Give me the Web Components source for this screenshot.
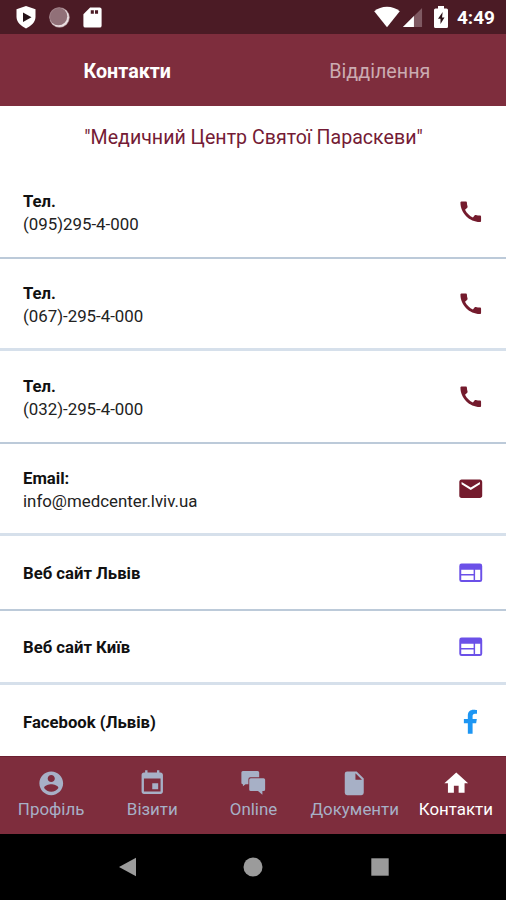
<!DOCTYPE html>
<html lang="uk">
<head>
<meta charset="utf-8">
<title>Контакти</title>
<style>
html,body{margin:0;height:100%;background:#fff}
body{font-family:Roboto,"Noto Sans",sans-serif;overflow:hidden}
</style>
</head>
<body>
<contacts-app></contacts-app>
<script>
const ICONS = {
  phone: '<path d="M20.01 15.38c-1.23 0-2.42-.2-3.53-.56-.35-.12-.74-.03-1.01.24l-1.57 1.97c-2.83-1.35-5.48-3.9-6.89-6.83l1.95-1.66c.27-.28.35-.67.24-1.02-.37-1.11-.56-2.3-.56-3.53 0-.54-.45-.99-.99-.99H4.19C3.65 3 3 3.24 3 3.99 3 13.28 10.73 21 20.01 21c.71 0 .99-.63.99-1.18v-3.45c0-.54-.45-.99-.99-.99z"/>',
  mail: '<path d="M20 4H4c-1.1 0-1.99.9-1.99 2L2 18c0 1.1.9 2 2 2h16c1.1 0 2-.9 2-2V6c0-1.1-.9-2-2-2zm0 4l-8 5-8-5V6l8 5 8-5v2z"/>',
  web: '<path fill-rule="evenodd" d="M4 4h16a2 2 0 0 1 2 2v12a2 2 0 0 1-2 2H4a2 2 0 0 1-2-2V6a2 2 0 0 1 2-2zM3.700 9.300v3.800h10.800V9.300zM3.700 14.400v3.900h10.800v-3.900zM15.800 9.300v9h4.500v-9z"/>',
  facebook: '<path d="M16.700 13.300l.6-3.800h-3.700V7c0-1.050.5-2.050 2.150-2.050h1.700V1.800S15.900 1.500 14.450 1.500c-3.050 0-5 1.800-5 5.150v2.850H6v3.800h3.450v9.200h4.150v-9.200z"/>',
  profile: '<path d="M12 2C6.480 2 2 6.480 2 12s4.480 10 10 10 10-4.480 10-10S17.520 2 12 2zm0 3c1.660 0 3 1.340 3 3s-1.340 3-3 3-3-1.340-3-3 1.340-3 3-3zm0 14.200c-2.500 0-4.710-1.280-6-3.220.03-1.990 4-3.080 6-3.080 1.990 0 5.970 1.090 6 3.080-1.290 1.940-3.500 3.220-6 3.220z"/>',
  event: '<path d="M17 12h-5v5h5v-5zM16 1v2H8V1H6v2H5c-1.110 0-1.990.9-1.990 2L3 19c0 1.100.89 2 2 2h14c1.100 0 2-.9 2-2V5c0-1.100-.9-2-2-2h-1V1h-2zm3 18H5V8h14v11z"/>',
  chat: '<path d="M3.300 1.700h12.400A1.300 1.300 0 0 1 17 3v4H9.500A1.600 1.600 0 0 0 7.900 8.600V12.800H5.500L3.300 14.500v-1.700A1.300 1.300 0 0 1 2 11.500V3a1.300 1.300 0 0 1 1.300-1.300z"/><path d="M9.900 7.700h10.800A1.300 1.300 0 0 1 22 9v8.200a1.300 1.300 0 0 1-1.300 1.300h-1v3.200L16 18.500H9.900a1.300 1.300 0 0 1-1.300-1.300V9a1.300 1.300 0 0 1 1.300-1.300z"/>',
  file: '<path fill-rule="evenodd" d="M6 2h8l6 6v12a2 2 0 0 1-2 2H6a2 2 0 0 1-2-2V4a2 2 0 0 1 2-2zM13 3.500V9h5.500z"/>',
  home: '<path d="M10 20v-6h4v6h5v-8h3L12 3 2 12h3v8z"/>',
  shield: '<path fill="#fff" d="M12 1l9.500 3.300V12c0 5.500-5 9-9.500 11.500C7.500 21 2.500 17.500 2.500 12V4.300z"/><path fill="#251318" d="M9 7.500v9.500l8.500-4.700z"/>',
  ring: '<circle cx="12" cy="12" r="10.300" fill="#eadfe1"/><circle cx="10.800" cy="10.800" r="9.300" fill="#917078"/><circle cx="12" cy="12" r="10.300" fill="none" stroke="#a98c93" stroke-width=".6"/>',
  sd: '<path fill="#fff" fill-rule="evenodd" d="M9.500 1.500h10a2 2 0 0 1 2 2v17a2 2 0 0 1-2 2h-15a2 2 0 0 1-2-2V8.500zM10.200 4.500V8h3.200V4.500zM14.600 4.500V8h3.200V4.500z"/>',
  wifi: '<path fill="#fff" d="M12 21.500L.2 6.600C3.500 4 7.500 2.500 12 2.500S20.500 4 23.800 6.600z"/>',
  signal: '<path fill="#7f5962" d="M2 22L22 2v20z"/><path fill="#fff" d="M2 22L13.500 10.500V22z"/>',
  battery: '<path fill="#fff" d="M9 1h6v2.500h2.500a1.500 1.500 0 0 1 1.500 1.500v16.500a1.500 1.500 0 0 1-1.500 1.500h-11A1.500 1.500 0 0 1 5 21.500V5a1.500 1.500 0 0 1 1.500-1.500H9z"/><path fill="#2c1218" d="M13.700 7L9 13.800h2.500V19l4-6.500H13z"/>',
  back: '<path d="M21 2.800v18.400L4 12z"/>',
  circle: '<circle cx="12" cy="12" r="9.500"/>',
  square: '<path d="M3.300 3.300h17.400v17.400H3.300z"/>'
};
const define = (tag, render) => customElements.define(tag, class extends HTMLElement {
  connectedCallback() {
    if (this.shadowRoot) return;
    this.attachShadow({mode: 'open'}).innerHTML = render(this);
  }
});

define('ui-icon', el => `<style>
:host{display:block;flex:none;width:var(--size,28px);height:var(--size,28px)}
svg{display:block;width:100%;height:100%;fill:currentColor}
</style><svg viewBox="0 0 24 24" aria-hidden="true">${ICONS[el.getAttribute('name')]}</svg>`);

define('status-bar', () => `<style>
:host{display:flex;align-items:center;justify-content:space-between;box-sizing:border-box;height:34px;padding:0 11px 0 14px;background:#4b1b25;color:#fff}
div{display:flex;align-items:center}
.left{gap:10px;--size:24px}
.ring{--size:23px}
.sd{--size:23px}
.right{--size:26px}
.signal{--size:23px;margin-left:1px}
.battery{--size:24px;margin-left:5px}
time{font:700 19px/24px Roboto,sans-serif;margin:2px 0 0 4px}
</style>
<div class="left"><ui-icon name="shield"></ui-icon><ui-icon class="ring" name="ring"></ui-icon><ui-icon class="sd" name="sd"></ui-icon></div>
<div class="right"><ui-icon name="wifi"></ui-icon><ui-icon class="signal" name="signal"></ui-icon><ui-icon class="battery" name="battery"></ui-icon><time>4:49</time></div>`);

define('top-tabs', () => `<style>
:host{display:grid;grid-template-columns:1fr 1fr;box-sizing:border-box;height:72px;padding:2px 0 0 1px;background:#7e2d3d}
::slotted(*){display:grid;place-items:center;font-size:19.700px;color:#cbabb1}
::slotted([selected]){font-weight:700;color:#fff}
</style><slot></slot>`);

define('contact-row', el => `<style>
:host{display:flex;align-items:center;justify-content:space-between;box-sizing:border-box;height:var(--h,92px);padding:2.500px 22px 0 23px;border-bottom:var(--line,2px solid #bccad9);color:#222;font-size:16.850px;line-height:23px}
:host([tall]){--h:92.330px}
:host(:not([tall])){--h:74.600px}
:host([soft]){--line:3px solid #d6e0eb}
:host([last]){--line:0;padding-top:0}
strong{display:block;font-weight:700;font-size:16.700px;color:#111}
ui-icon{--size:27.500px;color:var(--icon,#741b2d);margin-bottom:1.500px}
</style><div><strong>${el.getAttribute('label')}</strong><slot></slot></div><ui-icon name="${el.getAttribute('icon')}"></ui-icon>`);

define('nav-item', el => `<style>
:host{display:flex;flex-direction:column;align-items:center;color:#a7b0c6;font-size:16.900px;line-height:22px;padding:12px 0 0 1px;white-space:nowrap;min-width:0}
:host([selected]){color:#fff}
ui-icon{--size:28.500px}
</style><ui-icon name="${el.getAttribute('icon')}"></ui-icon><span><slot></slot></span>`);

define('bottom-nav', () => `<style>
:host{display:grid;grid-template-columns:repeat(5,1fr);box-sizing:border-box;height:78px;background:#7e2d3d;border-top:1px solid #6c1f30}
</style><slot></slot>`);

define('system-nav', () => `<style>
:host{display:flex;justify-content:center;align-items:center;gap:102.500px;height:66px;background:#000;color:#9b9b9b;--size:24px}
</style><ui-icon name="back"></ui-icon><ui-icon name="circle"></ui-icon><ui-icon name="square"></ui-icon>`);

define('contacts-app', () => `<style>
:host{display:flex;flex-direction:column;height:900px;width:506px;background:#fff}
h1{margin:0;height:60px;padding-left:1px;line-height:64px;text-align:center;font-size:19.600px;font-weight:400;color:#741b35}
main{flex:1;min-height:0;overflow:hidden}
.web{--icon:#6b50e8}
.fb{--icon:#1d96f3}
</style>
<status-bar></status-bar>
<top-tabs><span selected>Контакти</span><span>Відділення</span></top-tabs>
<main>
<h1>"Медичний Центр Святої Параскеви"</h1>
<contact-row tall label="Тел." icon="phone" style="--h:93px">(095)295-4-000</contact-row>
<contact-row tall soft label="Тел." icon="phone">(067)-295-4-000</contact-row>
<contact-row tall label="Тел." icon="phone">(032)-295-4-000</contact-row>
<contact-row tall soft label="Email:" icon="mail">info@medcenter.lviv.ua</contact-row>
<contact-row class="web" label="Веб сайт Львів" icon="web"></contact-row>
<contact-row class="web" soft label="Веб сайт Київ" icon="web"></contact-row>
<contact-row class="fb" last label="Facebook (Львів)" icon="facebook"></contact-row>
</main>
<bottom-nav>
<nav-item icon="profile">Профіль</nav-item><nav-item icon="event">Візити</nav-item><nav-item icon="chat">Online</nav-item><nav-item icon="file">Документи</nav-item><nav-item icon="home" selected>Контакти</nav-item>
</bottom-nav>
<system-nav></system-nav>`);
</script>
</body>
</html>
